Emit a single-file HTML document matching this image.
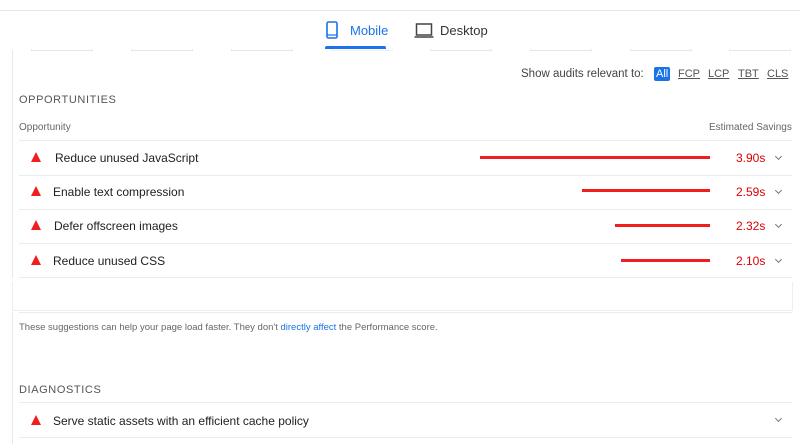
<!DOCTYPE html>
<html><head><style>
*{margin:0;padding:0;box-sizing:border-box}
body{width:800px;height:444px;background:#fff;font-family:"Liberation Sans",sans-serif;position:relative;overflow:hidden;color:#212121}
.a{position:absolute}
.t{font-size:12px;white-space:nowrap}
.sep{position:absolute;left:19px;right:8px;height:1px;background:#ebebeb}
.tri{position:absolute;width:0;height:0;border-left:5px solid transparent;border-right:5px solid transparent;border-bottom:10px solid #f01e1e}
.bar{position:absolute;height:3px;background:#f01e1e;right:90px}
.val{position:absolute;left:736px;font-size:12px;color:#d00}
.chev{position:absolute;left:776px;width:5px;height:5px;border-right:1px solid #777;border-bottom:1px solid #777;transform:rotate(45deg)}
.tile{position:absolute;top:49px;height:2px;border:1px solid #e6e6e6;border-top:none;width:62px}
</style></head><body>
<div class="a" style="left:0;right:0;top:10px;height:1px;background:#e8e8e8"></div>
<svg class="a" style="left:326px;top:21px" width="12" height="18" viewBox="0 0 12 18"><rect x="1" y="1" width="10" height="16" rx="1.5" fill="none" stroke="#1a73e8" stroke-width="1.6"/><line x1="1" y1="14" x2="11" y2="14" stroke="#1a73e8" stroke-width="1.2"/></svg>
<div class="a t" style="left:350px;top:23px;font-size:13px;color:#1a73e8">Mobile</div>
<div class="a" style="left:325px;top:46px;width:61px;height:3px;background:#1a73e8;border-radius:2px 2px 0 0"></div>
<svg class="a" style="left:414px;top:23px" width="20" height="16" viewBox="0 0 20 16"><rect x="2.5" y="1" width="15" height="11" fill="none" stroke="#444" stroke-width="1.5"/><line x1="0.5" y1="14" x2="19.5" y2="14" stroke="#444" stroke-width="1.6"/></svg>
<div class="a t" style="left:440px;top:23px;font-size:13px;color:#333">Desktop</div>
<div class="tile" style="left:31px"></div><div class="tile" style="left:131px"></div><div class="tile" style="left:231px"></div><div class="tile" style="left:331px;border-color:#f0f0f0"></div><div class="tile" style="left:430px"></div><div class="tile" style="left:530px"></div><div class="tile" style="left:630px"></div><div class="tile" style="left:729px"></div>
<div class="a" style="left:12px;top:50px;width:1px;height:228px;background:#e8e8e8"></div>
<div class="a" style="left:12px;top:312px;width:1px;height:132px;background:#e8e8e8"></div>
<div class="a t" style="left:521px;top:68px;font-size:11.5px;color:#444">Show audits relevant to:</div>
<div class="a t" style="left:654px;top:67px;background:#1a73e8;color:#fff;font-size:11px;padding:1px 2px;border-radius:2px">All</div>
<div class="a t" style="left:678px;top:68px;font-size:11px;color:#555;text-decoration:underline">FCP</div>
<div class="a t" style="left:708px;top:68px;font-size:11px;color:#555;text-decoration:underline">LCP</div>
<div class="a t" style="left:738px;top:68px;font-size:11px;color:#555;text-decoration:underline">TBT</div>
<div class="a t" style="left:767px;top:68px;font-size:11px;color:#555;text-decoration:underline">CLS</div>
<div class="a t" style="left:19px;top:94px;font-size:11px;letter-spacing:.6px;color:#555">OPPORTUNITIES</div>
<div class="a t" style="left:19px;top:122px;font-size:10px;color:#666">Opportunity</div>
<div class="a t" style="left:709px;top:122px;font-size:10px;color:#666">Estimated Savings</div>
<div class="sep" style="top:140px"></div>
<div class="tri" style="left:31px;top:152px"></div><div class="a t" style="left:55px;top:151px">Reduce unused JavaScript</div><div class="bar" style="left:480px;top:156px"></div><div class="val" style="top:151px">3.90s</div><div class="chev" style="top:154px"></div>
<div class="sep" style="top:175px"></div>
<div class="tri" style="left:31px;top:186px"></div><div class="a t" style="left:53px;top:185px">Enable text compression</div><div class="bar" style="left:582px;top:189px"></div><div class="val" style="top:185px">2.59s</div><div class="chev" style="top:188px"></div>
<div class="sep" style="top:209px"></div>
<div class="tri" style="left:31px;top:220px"></div><div class="a t" style="left:54px;top:219px">Defer offscreen images</div><div class="bar" style="left:615px;top:224px"></div><div class="val" style="top:219px">2.32s</div><div class="chev" style="top:222px"></div>
<div class="sep" style="top:243px"></div>
<div class="tri" style="left:31px;top:255px"></div><div class="a t" style="left:53px;top:254px">Reduce unused CSS</div><div class="bar" style="left:621px;top:259px"></div><div class="val" style="top:254px">2.10s</div><div class="chev" style="top:257px"></div>
<div class="sep" style="top:277px"></div>
<div class="a" style="left:12px;top:282px;width:781px;height:29px;border:1px solid #eee;border-top:none"></div>
<div class="sep" style="top:312px;left:19px"></div>
<div class="a t" style="left:19px;top:322px;font-size:9.5px;color:#666">These suggestions can help your page load faster. They don't <span style="color:#1a73e8">directly affect</span> the Performance score.</div>
<div class="a t" style="left:19px;top:384px;font-size:11px;letter-spacing:.6px;color:#555">DIAGNOSTICS</div>
<div class="sep" style="top:402px"></div>
<div class="tri" style="left:31px;top:415px"></div><div class="a t" style="left:53px;top:414px">Serve static assets with an efficient cache policy</div><div class="chev" style="top:416px"></div>
<div class="sep" style="top:437px"></div>
</body></html>
